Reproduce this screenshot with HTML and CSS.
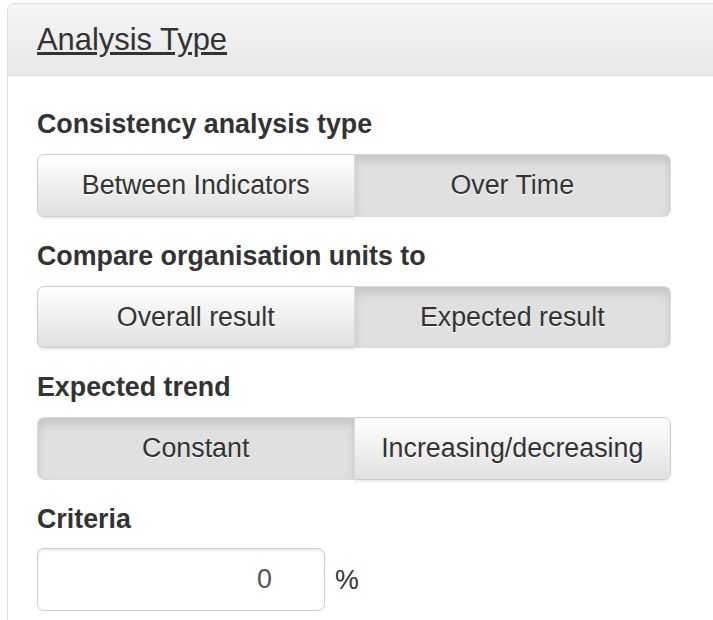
FILE: index.html
```html
<!DOCTYPE html>
<html lang="en">
<head>
<meta charset="utf-8">
<title>Analysis Type</title>
<link rel="stylesheet" href="styles.css">
</head>
<body>
<div class="panel">
  <div class="panel-heading">
    <h3 class="panel-title"><a href="#">Analysis Type</a></h3>
  </div>
  <div class="panel-body">
    <div class="form-group">
      <label class="control-label">Consistency analysis type</label>
      <div class="btn-group">
        <button class="btn">Between Indicators</button>
        <button class="btn active">Over Time</button>
      </div>
    </div>
    <div class="form-group">
      <label class="control-label">Compare organisation units to</label>
      <div class="btn-group">
        <button class="btn">Overall result</button>
        <button class="btn active">Expected result</button>
      </div>
    </div>
    <div class="form-group">
      <label class="control-label">Expected trend</label>
      <div class="btn-group">
        <button class="btn active">Constant</button>
        <button class="btn">Increasing/decreasing</button>
      </div>
    </div>
    <div class="form-group">
      <label class="control-label">Criteria</label>
      <div class="criteria-row">
        <input class="form-control" type="text" value="0">
        <span class="unit">%</span>
      </div>
    </div>
  </div>
</div>
</body>
</html>
```

FILE: styles.css
```css
html, body {
  margin: 0;
  overflow: hidden;
  background: #fff;
}
body {
  padding: 3px 0 0 7px;
  font-family: "Liberation Sans", Arial, Helvetica, sans-serif;
  font-size: 26.8px;
  color: #333;
}
.panel {
  width: 716px;
  height: 630px;
  border: 1px solid #ddd;
  border-radius: 7px;
  background: #fff;
  box-sizing: border-box;
}
.panel-heading {
  padding: 19px 29px 18px;
  background: linear-gradient(to bottom, #f5f5f5 0, #e8e8e8 100%);
  border-bottom: 1px solid #ddd;
  border-radius: 6px 6px 0 0;
}
.panel-title {
  margin: 0;
  font-size: 30.9px;
  font-weight: normal;
  line-height: 34px;
}
.panel-title a {
  color: #333;
  text-decoration: underline;
}
.panel-body {
  padding: 29px 29px 0;
}
.form-group {
  margin-bottom: 20px;
}
.control-label {
  display: block;
  font-weight: bold;
  line-height: 38px;
  margin-bottom: 11px;
}
.btn-group {
  display: flex;
  width: 634px;
}
.btn {
  flex: 1 1 0;
  font: inherit;
  color: #333;
  line-height: 38px;
  padding: 11.25px 20px;
  margin: 0;
  border: 1px solid #ccc;
  background: linear-gradient(to bottom, #fff 0, #e0e0e0 100%);
  text-shadow: 0 1px 0 #fff;
  box-shadow: inset 0 2px 0 rgba(255,255,255,.15), 0 2px 2px rgba(0,0,0,.075);
  white-space: nowrap;
  cursor: pointer;
}
.btn + .btn {
  margin-left: -1px;
}
.btn:first-child {
  border-radius: 7px 0 0 7px;
}
.btn:last-child {
  border-radius: 0 7px 7px 0;
}
.btn.active {
  background: #e0e0e0;
  border-color: #dbdbdb;
  box-shadow: inset 0 5.7px 9.5px rgba(0,0,0,.125);
  position: relative;
  z-index: 1;
}
.criteria-row {
  display: flex;
  align-items: center;
}
.form-control {
  width: 288px;
  height: 63px;
  box-sizing: border-box;
  font: inherit;
  color: #555;
  line-height: 38px;
  padding: 11px 52px 11px 23px;
  text-align: right;
  border: 1px solid #ccc;
  border-radius: 7px;
  box-shadow: inset 0 2px 2px rgba(0,0,0,.075);
  background: #fff;
  margin: -1px 0 0;
}
.unit {
  margin-left: 10px;
  line-height: 38px;
}
```
